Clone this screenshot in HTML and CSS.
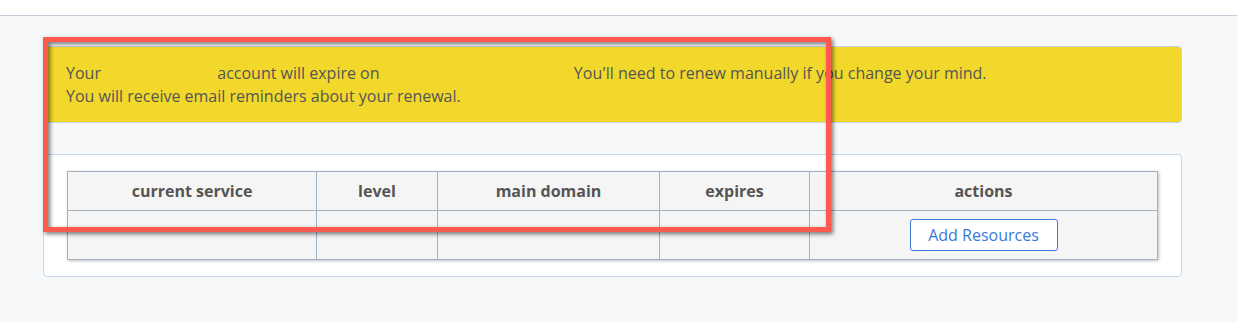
FILE: index.html
```html
<!DOCTYPE html>
<html lang="en">
<head>
  <meta charset="UTF-8">
  <title>Account</title>
  <link rel="stylesheet" href="styles.css">
</head>
<body>

  <!-- Top bar -->
  <div class="topbar"></div>

  <!-- Main content -->
  <div class="content">
    <div class="alert">
      <p>Your <span class="redacted redacted-name"></span> account will expire on <span class="redacted redacted-date"></span> You'll need to renew manually if you change your mind.</p>
      <p>You will receive email reminders about your renewal.</p>
    </div>

    <div class="card">
      <table class="services">
        <thead>
          <tr>
            <th class="col-service">current service</th>
            <th class="col-level">level</th>
            <th class="col-domain">main domain</th>
            <th class="col-expires">expires</th>
            <th class="col-actions">actions</th>
          </tr>
        </thead>
        <tbody>
          <tr>
            <td></td>
            <td></td>
            <td></td>
            <td></td>
            <td><button class="btn-outline">Add Resources</button></td>
          </tr>
        </tbody>
      </table>
    </div>

    <!-- Annotation frame -->
    <div class="highlight"></div>
  </div>

</body>
</html>
```

FILE: styles.css
```css
* {
  box-sizing: border-box;
}

body {
  margin: 0;
  font-family: 'Open Sans', 'Liberation Sans', sans-serif;
  font-size: 16px;
  color: #555;
  background: #f7f8fa;
  height: 322px;
  overflow: hidden;
}

.topbar {
  height: 16px;
  background: #fff;
  border-bottom: 1px solid #c8cfdb;
}

.content {
  position: relative;
  padding: 30px 55px 0 43px;
}

.alert {
  background: #f2d82b;
  border: 1px solid #c9d3de;
  border-radius: 4px;
  padding: 15px 22px 15px;
  height: 77px;
}

.alert p {
  margin: 0;
  line-height: 23px;
}

.redacted {
  display: inline-block;
  vertical-align: middle;
}

.redacted-name {
  width: 108px;
}

.redacted-date {
  width: 186px;
}

.card {
  margin-top: 31px;
  background: #fff;
  border: 1px solid #c6d6e6;
  border-radius: 4px;
  padding: 16px 23px;
}

.services {
  width: 100%;
  border-collapse: collapse;
  background: #f5f5f5;
  box-shadow: 1px 1px 3px rgba(0, 0, 0, 0.25);
}

.services th,
.services td {
  border: 1px solid #a3b2c2;
  text-align: center;
  padding: 0;
}

.services th {
  height: 39px;
  font-weight: bold;
  color: #555;
}

.services td {
  height: 49px;
}

.col-service { width: 249px; }
.col-level { width: 121px; }
.col-domain { width: 222px; }
.col-expires { width: 150px; }

.btn-outline {
  width: 148px;
  height: 32px;
  background: #fff;
  border: 1px solid #3b78d8;
  border-radius: 3px;
  color: #3b78d8;
  font-family: 'Open Sans', 'Liberation Sans', sans-serif;
  font-size: 16px;
  cursor: pointer;
}

.highlight {
  position: absolute;
  left: 43px;
  top: 21px;
  width: 788px;
  height: 195px;
  border: 5px solid #ff5a4f;
  filter: drop-shadow(2px 2px 2px rgba(0, 0, 0, 0.55));
  pointer-events: none;
}
```
